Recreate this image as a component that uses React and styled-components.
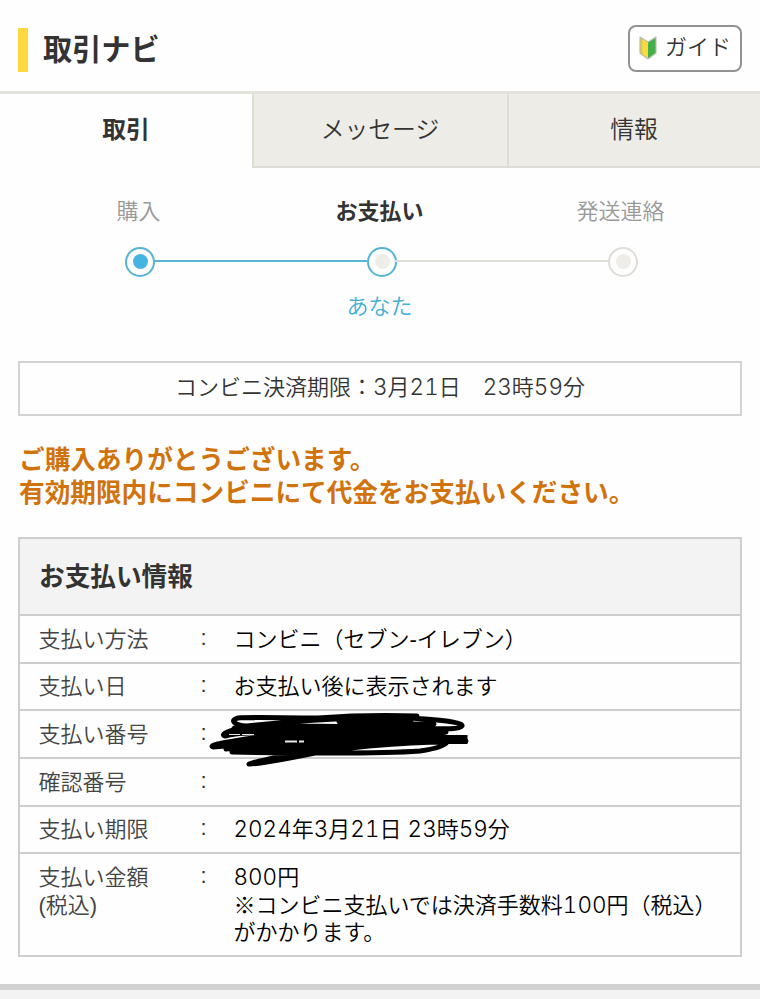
import React from "react";
import styled, { createGlobalStyle, css } from "styled-components";

const tabs = [
  { label: "取引", active: true },
  { label: "メッセージ" },
  { label: "情報" },
];

const rows = [
  { label: "支払い方法", value: "コンビニ（セブン-イレブン）" },
  { label: "支払い日", value: "お支払い後に表示されます" },
  { label: "支払い番号", masked: true },
  { label: "確認番号", value: "" },
  { label: "支払い期限", value: "2024年3月21日 23時59分" },
];

// Sets the digits of a text in the wider numeral face
const withNumerals = (text = "") =>
  text
    .split(/(\d+)/)
    .map((part, i) => (i % 2 ? <Num key={i}>{part}</Num> : part));

const App = () => {
  return (
    <Page>
      <GlobalStyle />
      <Header>
        <Title>取引ナビ</Title>
        <GuideButton>
          <BeginnerMark />
          ガイド
        </GuideButton>
      </Header>
      <Tabs>
        {tabs.map((tab) => (
          <Tab key={tab.label} $active={tab.active}>
            {tab.label}
          </Tab>
        ))}
      </Tabs>
      <Steps>
        <StepLabels>
          <StepLabel>購入</StepLabel>
          <StepLabel $current>お支払い</StepLabel>
          <StepLabel>発送連絡</StepLabel>
        </StepLabels>
        <Track>
          <Dot $ring="#55b4d6" $fill="#45b5df" />
          <Line $color="#5ab5d3" />
          <Dot $ring="#55b4d6" $fill="#eeede8" />
          <Line $color="#deddd6" $overlap />
          <Dot $ring="#deddd6" $fill="#eeede8" />
        </Track>
        <StepActor>あなた</StepActor>
      </Steps>
      <Deadline>
        {withNumerals("コンビニ決済期限：3月21日　23時59分")}
      </Deadline>
      <Message>
        ご購入ありがとうございます。
        <br />
        有効期限内にコンビニにて代金をお支払いください。
      </Message>
      <Panel>
        <PanelTitle>お支払い情報</PanelTitle>
        {rows.map((row) => (
          <Row key={row.label}>
            <Label>{row.label}</Label>
            <Colon>:</Colon>
            <Value>
              {withNumerals(row.value)}
              {row.masked && <Scribble />}
            </Value>
          </Row>
        ))}
        <Row $last>
          <Label>
            支払い金額
            <br />
            (税込)
          </Label>
          <Colon>:</Colon>
          <Value>
            {withNumerals("800円")}
            <br />
            {withNumerals("※コンビニ支払いでは決済手数料100円（税込）")}
            <br />
            がかかります。
          </Value>
        </Row>
      </Panel>
      <Footer />
    </Page>
  );
};

export default App;

const BeginnerMark = () => (
  <svg width="20" height="26" viewBox="0 0 20 26">
    <path d="M2 2 L10 7 V24 L2 18 Z" fill="#f9dc3c" />
    <path d="M10 7 L18 2 V18 L10 24 Z" fill="#45ad4a" />
    <path d="M2 2 L4.5 3.6 V19.8 L2 18 Z" fill="#e5c63a" />
    <path
      d="M2 2 L10 7 L18 2 V18 L10 24 L2 18 Z"
      fill="none"
      stroke="#b9bdb0"
      strokeWidth="1.2"
      strokeLinejoin="round"
    />
  </svg>
);

const Scribble = () => (
  <ScribbleSvg viewBox="200 700 280 80">
    <path d="M417 715 C385 714 345 715 318 717 C285 717 251 716 238 717 C230 719 233 724 247 725 C290 720 380 714 425 718 C450 720 463 722 462 725 C459 730 430 727 400 727 C330 725 256 723 238 728 C224 731 221 734 225 735 C250 729 380 722 434 723 C370 727 250 743 213 746 C207 744 232 740 260 736 C320 726 410 731 446 731 C405 738 290 741 226 748 C250 738 350 733 434 734 C400 742 290 747 232 751 C280 752 380 753 420 750 C434 748 445 745 447 741 C400 741 340 747 305 754 C285 758 260 763 249 763 C270 756 330 747 380 743 C400 740 430 739 466 740" />
    <Stroke d="M340 720 L410 719 M235 728 L430 726 M242 731 L440 730" $width={7} />
    <Stroke d="M270 735 L440 734 M310 740 L425 738 M235 748 L340 747" $width={9} />
    <Stroke d="M425 738.5 H467.5" $width={9} $flat />
    <Stroke d="M285 740.5 H297 M299 740.5 H304" $width={2} $flat $light />
    <Stroke d="M229 733.5 H240 M242 733.5 H254" $width={1} $flat $light />
  </ScribbleSvg>
);

const GlobalStyle = createGlobalStyle`
  * {
    box-sizing: border-box;
  }

  body {
    margin: 0;
    background-color: #fefefe;
    font-family: "Liberation Sans", "Noto Sans CJK JP", sans-serif;
    font-weight: 350;
    font-size: 22px;
    line-height: 27.6px;
    color: #333;
  }
`;

const Page = styled.div`
  display: flex;
  flex-direction: column;
  width: 760px;
  height: 999px;
  overflow: hidden;
`;

const Num = styled.span`
  font-family: Inter, sans-serif;
  font-size: 22.5px;
  line-height: 1;
  font-variant-numeric: tabular-nums;
`;

const Header = styled.header`
  display: flex;
  flex: none;
  align-items: flex-start;
  justify-content: space-between;
  height: 94px;
  padding: 25px 18px 0;
  border-bottom: 3px solid #e3e2dd;
`;

const Title = styled.h1`
  height: 44px;
  margin: 3px 0 0;
  padding-left: 15px;
  border-left: 10px solid #ffd83f;
  font-size: 29.2px;
  font-weight: 700;
  line-height: 45px;
`;

const GuideButton = styled.button`
  display: flex;
  align-items: center;
  gap: 7px;
  width: 114px;
  height: 47px;
  padding: 0 0 1px 8px;
  border: 2px solid #929292;
  border-radius: 8px;
  background-color: #fff;
  color: #333;
  font: inherit;
  white-space: nowrap;
`;

const Tabs = styled.nav`
  display: grid;
  flex: none;
  grid-template-columns: 252px 255px 253px;
  height: 74px;
`;

const Tab = styled.div`
  display: flex;
  align-items: center;
  justify-content: center;
  padding: 0 1px 0 0;
  font-size: 23.8px;

  ${({ $active }) =>
    $active
      ? css`
          padding: 0 0 3px;
          font-weight: 700;
        `
      : css`
          border-left: 2px solid #dedcd5;
          border-bottom: 2px solid #dedcd5;
          background-color: #edece7;
        `}
`;

const Steps = styled.section`
  flex: none;
  height: 193px;
  padding-top: 30px;
`;

const StepLabels = styled.div`
  display: grid;
  grid-template-columns: repeat(3, 241px);
  margin-left: 18px;
`;

const StepLabel = styled.div`
  text-align: center;
  color: ${({ $current }) => ($current ? "#333" : "#999")};
  font-weight: ${({ $current }) => ($current ? 700 : 350)};
`;

const Track = styled.div`
  display: flex;
  align-items: center;
  height: 30px;
  margin: 21px 122px 0 125px;
`;

const Dot = styled.span`
  display: flex;
  flex: none;
  align-items: center;
  justify-content: center;
  width: 30px;
  height: 30px;
  border: 2px solid ${({ $ring }) => $ring};
  border-radius: 50%;

  &::after {
    content: "";
    width: 15px;
    height: 15px;
    border-radius: 50%;
    background-color: ${({ $fill }) => $fill};
  }
`;

const Line = styled.span`
  flex: 1 0 ${({ $overlap }) => ($overlap ? "1px" : 0)};
  height: 2px;
  margin-bottom: 1px;
  margin-left: ${({ $overlap }) => ($overlap ? "-2px" : 0)};
  background-color: ${({ $color }) => $color};
`;

const StepActor = styled.div`
  margin-top: 16px;
  padding-right: 1px;
  text-align: center;
  color: #45b0d5;
`;

const Deadline = styled.div`
  flex: none;
  height: 55px;
  margin: 0 18px;
  border: 2px solid #d3d3d3;
  text-align: center;
  line-height: 50px;
`;

const Message = styled.p`
  flex: none;
  height: 121px;
  margin: 0 19px;
  padding-top: 28px;
  color: #d1730d;
  font-size: 25.65px;
  font-weight: 700;
  line-height: 33px;
  white-space: nowrap;
`;

const Panel = styled.section`
  flex: none;
  height: 420px;
  margin: 0 18px;
  border: 2px solid #cecece;
`;

const PanelTitle = styled.h2`
  height: 75px;
  margin: 0;
  padding-left: 19px;
  background-color: #f3f3f3;
  font-size: 25.65px;
  font-weight: 700;
  line-height: 77px;
`;

const Row = styled.div`
  display: grid;
  grid-template-columns: 162px 33px 1fr;
  height: ${({ $last }) => ($last ? "103px" : "47.7px")};
  padding: 9.5px 0 0 18.5px;
  border-top: 2px solid #cecece;
  white-space: nowrap;
`;

const Label = styled.div`
  color: #444;
`;

const Colon = styled.div`
  margin-top: -2px;
  color: #333;
`;

const Value = styled.div`
  position: relative;
  color: #000;
`;

// Hand-drawn strokes that run over the value cell and its borders
const ScribbleSvg = styled.svg`
  position: absolute;
  top: -20px;
  left: -34px;
  width: 280px;
  height: 80px;

  path {
    fill: none;
    stroke: #000;
    stroke-width: 5;
    stroke-linecap: round;
    stroke-linejoin: round;
  }
`;

const Stroke = styled.path`
  && {
    stroke: ${({ $light }) => ($light ? "#e8e8e8" : "#000")};
    stroke-width: ${({ $width }) => $width};
    stroke-linecap: ${({ $flat }) => ($flat ? "butt" : "round")};
  }
`;

const Footer = styled.footer`
  flex: 1;
  margin-top: 27px;
  border-top: 6px solid #d1d1d1;
  background-color: #f3f3f3;
`;
